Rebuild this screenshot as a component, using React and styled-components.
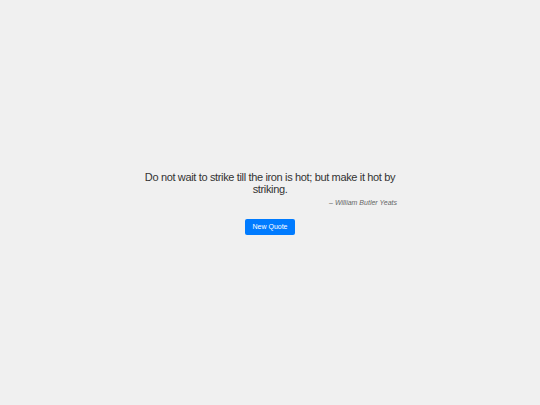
import React, { useState } from 'react'
import styled, { createGlobalStyle } from 'styled-components'

const quotes = [
  { text: 'Do not wait to strike till the iron is hot; but make it hot by striking.', author: 'William Butler Yeats' },
  { text: 'The only way to do great work is to love what you do.', author: 'Steve Jobs' },
]

const GlobalStyle = createGlobalStyle`
  html, body { margin: 0; padding: 0; }
  body {
    background: #f0f0f0;
    font-family: "Liberation Sans", Arial, sans-serif;
  }
`

const Page = styled.main`
  min-height: 100vh;
  display: flex;
  align-items: center;
  justify-content: center;
`

const Box = styled.div`
  width: 262px;
  display: flex;
  flex-direction: column;
  align-items: center;
`

const Quote = styled.p`
  margin: 0;
  font-size: 11px;
  letter-spacing: -0.35px;
  line-height: 12px;
  color: #333;
  text-align: center;
`

const Author = styled.p`
  align-self: stretch;
  margin: 4px 0 0;
  padding-right: 4px;
  font-size: 7px;
  font-style: italic;
  color: #666;
  text-align: right;
`

const Button = styled.button`
  margin-top: 13px;
  padding: 0 7px;
  height: 16px;
  border: none;
  border-radius: 2px;
  background: #007bff;
  color: #fff;
  font-family: inherit;
  font-size: 7px;
  cursor: pointer;
`

export default function App() {
  const [i, setI] = useState(0)
  const q = quotes[i]
  return (
    <>
      <GlobalStyle />
      <Page>
        <Box>
          <Quote>{q.text}</Quote>
          <Author>– {q.author}</Author>
          <Button onClick={() => setI((i + 1) % quotes.length)}>New Quote</Button>
        </Box>
      </Page>
    </>
  )
}
